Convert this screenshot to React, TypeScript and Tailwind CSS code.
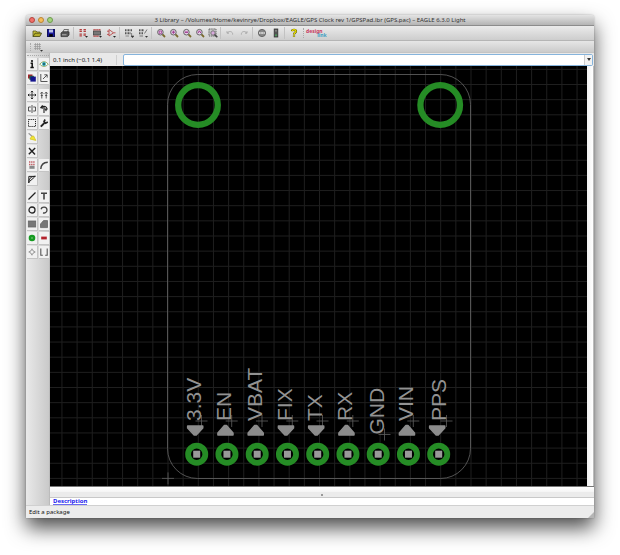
import type { ReactNode } from "react";

function Icon({ children }: { children: ReactNode }) {
  return (
    <svg viewBox="0 0 10 10" className="size-2.5 shrink-0" fill="none" stroke="#222" aria-hidden="true">
      {children}
    </svg>
  );
}

const magnifier = (mark: ReactNode) => (
  <>
    <path d="M6.2 6.2 L9 9" stroke="#7a6a2c" strokeWidth="1.8" />
    <circle cx="4.4" cy="4.2" r="2.8" fill="#e3cfe6" stroke="#666" />
    {mark}
  </>
);

const pink = "#a03a90";

const icons: Record<string, ReactNode> = {
  Open: (
    <>
      <path d="M1 8.5 V3 H4 L5 4 H8 V5" fill="#c9c23a" stroke="#555520" strokeWidth="0.8" />
      <path d="M1 8.5 L3 5.2 H9.6 L7.8 8.5 Z" fill="#b3ad2a" stroke="#444410" strokeWidth="0.8" />
    </>
  ),
  Save: (
    <>
      <rect x="1.5" y="1.5" width="7" height="7" fill="#1c1c9c" stroke="#11115c" />
      <rect x="3" y="1.5" width="4" height="3" fill="#b9bfe8" stroke="none" />
      <rect x="3.2" y="6.2" width="3.6" height="2.4" fill="#000" stroke="none" />
    </>
  ),
  Print: (
    <>
      <path d="M3 4 L4 1.5 H8.5 L7.5 4" fill="#ddd" stroke="#555" strokeWidth="0.8" />
      <path d="M1 5 L2.6 3.8 H9 V7 L7.6 8.6 H1 Z" fill="#555" stroke="#333" strokeWidth="0.8" />
      <path d="M2 6.8 H6.5" stroke="#ccc" strokeWidth="0.8" />
    </>
  ),
  Device: (
    <>
      <path d="M2.7 1 V4 M2.7 5.5 V9 M6.7 1 V4 M6.7 5.5 V8" stroke="#b34040" strokeWidth="2.4" strokeDasharray="1.2 0.5" />
      <path d="M7 8 H10 L8.5 9.7 Z" fill="#222" stroke="none" />
    </>
  ),
  Package: (
    <>
      <rect x="1.5" y="3" width="7" height="4" fill="#777" stroke="#444" strokeWidth="0.8" />
      <path d="M1.5 1.8 H8.5 M1.5 8.2 H7" stroke="#b33a3a" strokeWidth="1.4" strokeDasharray="1.2 0.7" />
      <path d="M7 8 H10 L8.5 9.7 Z" fill="#222" stroke="none" />
    </>
  ),
  Symbol: (
    <>
      <path d="M3 1.5 V8 L7.5 4.8 Z M1 3.2 H3 M1 6.4 H3 M7.5 4.8 H9.5" stroke="#b84848" strokeWidth="0.9" />
      <path d="M7 8 H10 L8.5 9.7 Z" fill="#222" stroke="none" />
    </>
  ),
  Script: (
    <>
      <path d="M1 2.2 H8.5 M1 5.2 H6.5" stroke="#555" strokeWidth="2" strokeDasharray="1 0.5" />
      <path d="M1.5 8 H5" stroke="#888" />
      <path d="M7.6 5 V8 M7 8 H10 L8.5 9.7 Z" fill="#333" stroke="#444" strokeWidth="0.6" />
    </>
  ),
  "Run ULP": (
    <>
      <path d="M1 2.2 H6 M1 5.2 H5" stroke="#555" strokeWidth="2" strokeDasharray="1 0.5" />
      <path d="M9 1.5 L6.5 5.5 M1.5 8 H5" stroke="#777" />
      <path d="M7 8 H10 L8.5 9.7 Z" fill="#333" stroke="none" />
    </>
  ),
  "Zoom to fit": magnifier(<path d="M3.2 3 H5.6 V5.4 H3.2 Z" stroke={pink} strokeWidth="0.8" />),
  "Zoom in": magnifier(<path d="M4.4 2.6 V5.8 M2.8 4.2 H6" stroke={pink} />),
  "Zoom out": magnifier(<path d="M2.8 4.2 H6" stroke={pink} strokeWidth="1.4" />),
  Redraw: magnifier(<path d="M3 5 L4.4 2.8 L5.8 5" stroke={pink} />),
  "Zoom select": (
    <>
      <rect x="1" y="1" width="7" height="7" stroke="#666" strokeDasharray="1.5 0.7" fill="#ccc" />
      <circle cx="5" cy="5" r="2.2" fill="#d8a9dc" stroke="#777" />
      <path d="M6.5 6.5 L9.3 9.3" stroke="#444" strokeWidth="1.6" />
    </>
  ),
  Undo: <path d="M2 3.2 V5.2 H4 M2.2 5 C4 2.6 8 3.2 7.6 6.6" stroke="#a6a6a6" strokeWidth="0.9" />,
  Redo: <path d="M8 3.2 V5.2 H6 M7.8 5 C6 2.6 2 3.2 2.4 6.6" stroke="#a6a6a6" strokeWidth="0.9" />,
  Stop: (
    <>
      <circle cx="5" cy="5" r="3.6" fill="#888" stroke="#666" />
      <path d="M2.2 5 H7.8" stroke="#ddd" strokeWidth="1.8" strokeDasharray="1 0.5" />
    </>
  ),
  Go: (
    <>
      <rect x="3.2" y="1" width="3.6" height="8" fill="#555" stroke="#333" strokeWidth="0.8" />
      <circle cx="5" cy="7.3" r="1.1" fill="#4c9a5c" stroke="none" />
      <circle cx="5" cy="2.8" r="1" fill="#888" stroke="none" />
    </>
  ),
  Help: (
    <>
      <path d="M3 3.2 C3.2 1.2 7 1.3 7 3.2 C7 4.6 5 4.6 5 6.4 M5 7.6 V8.8" stroke="#444400" strokeWidth="2.2" />
      <path d="M3 3.2 C3.2 1.2 7 1.3 7 3.2 C7 4.6 5 4.6 5 6.4 M5 7.6 V8.8" stroke="#f0e400" strokeWidth="1.3" />
    </>
  ),
  Info: (
    <>
      <circle cx="5" cy="2" r="1.1" fill="#111" stroke="none" />
      <path d="M3.6 4.2 H5.2 V8.5 M3.4 8.5 H6.8" stroke="#111" strokeWidth="1.5" />
    </>
  ),
  Show: (
    <>
      <path d="M0.8 5.2 C3 2 7 2 9.2 5.2 C7 8 3 8 0.8 5.2 Z" fill="#fff" stroke="#7d9a4a" strokeWidth="0.9" />
      <circle cx="5" cy="5" r="1.9" fill="#2aa7b5" stroke="none" />
      <circle cx="5" cy="5" r="0.8" fill="#123" stroke="none" />
    </>
  ),
  Display: (
    <>
      <rect x="1" y="1.5" width="4.5" height="4" fill="#a3222c" stroke="none" />
      <rect x="2.4" y="2.8" width="4.5" height="4" fill="#1d6b3c" stroke="none" />
      <rect x="3.4" y="3.6" width="5.4" height="5" fill="#15158e" stroke="none" />
    </>
  ),
  Mark: <path d="M1.8 1 V8.5 H8.5 M4 6 L8 2 M5.3 1.8 H8.2 V4.6" stroke="#444" strokeWidth="0.9" />,
  Move: (
    <path d="M5 1 V9 M1 5 H9 M3.8 2.2 L5 1 L6.2 2.2 M3.8 7.8 L5 9 L6.2 7.8 M2.2 3.8 L1 5 L2.2 6.2 M7.8 3.8 L9 5 L7.8 6.2" strokeWidth="0.9" />
  ),
  Copy: <path d="M2.8 3 V8.5 M7.2 3 V8.5 M1.4 3.6 L2.8 2 L4.2 3.6 M5.8 3.6 L7.2 2 L8.6 3.6 M1.8 5.5 H3.8 M6.2 5.5 H8.2" stroke="#444" strokeWidth="0.9" />,
  Mirror: <path d="M5 1 V9 M3.8 3 H1.5 V7 H3.8 M6.2 3 H8.5 V7 H6.2" stroke="#444" strokeWidth="0.9" />,
  Rotate: (
    <>
      <path d="M3.6 1.4 L1.8 3.6 L4 4.2 M2.4 3.2 C5 1.4 8 2.6 8 5.4 M5 2 V9" strokeWidth="1.1" />
      <path d="M5 4.6 H8.8 L7 7.4 Z" fill="#333" stroke="none" />
    </>
  ),
  Group: <rect x="1.5" y="1.5" width="7" height="7" strokeDasharray="1.2 0.9" />,
  Change: (
    <>
      <path d="M1.8 8.6 L6 4.4" strokeWidth="2" />
      <path d="M6.2 1.5 L5 3.5 L6.6 5.2 L8.8 4" strokeWidth="1.6" />
    </>
  ),
  Paste: (
    <>
      <path d="M1.6 1.2 L5.6 4.8" stroke="#999" strokeWidth="1.2" />
      <path d="M4.6 4.4 L6.6 4 L8.8 8.4 L3 7 Z" fill="#f2e534" stroke="#d2c428" strokeWidth="0.8" />
    </>
  ),
  Delete: <path d="M2 2 L8 8.4 M8.2 2 L1.8 8.2" strokeWidth="1.4" />,
  Name: (
    <>
      <path d="M2 2 H8 M2 4.4 H8" stroke="#c05c62" strokeWidth="1.5" strokeDasharray="1.4 0.7" />
      <rect x="2.4" y="5.8" width="5.2" height="3" fill="#888" stroke="none" />
    </>
  ),
  Miter: <path d="M1.8 9 C2 4.5 4 2.4 8.8 2.2" stroke="#444" strokeWidth="1.4" />,
  Split: <path d="M1.8 9 C2 5 3 2.4 8.8 2.2 M1.8 9 V2.4 H8 M2.4 7.6 L7.6 3" strokeWidth="1" />,
  Wire: <path d="M1.5 8.5 L8.5 1.5" strokeWidth="1.3" />,
  Text: <path d="M2 2.2 H8 M5 2.2 V8.6" stroke="#444" strokeWidth="1.6" />,
  Circle: <circle cx="5" cy="5" r="3" strokeWidth="1.3" />,
  Arc: <path d="M2 4.2 C2.8 1.4 7.8 1.4 8 5 C8 7.4 5.8 8.4 4 7.8" stroke="#444" strokeWidth="1.3" />,
  Rect: <rect x="1.3" y="2" width="7.4" height="6" fill="#777" stroke="#666" strokeWidth="0.8" />,
  Polygon: <path d="M1.5 8.6 V5 L4.5 1.6 H8.5 V8.6 Z" fill="#777" stroke="#666" strokeWidth="0.8" />,
  Pad: (
    <>
      <circle cx="5" cy="5" r="3.3" fill="#159a20" stroke="none" />
      <circle cx="5" cy="5" r="0.8" fill="#8fcf8f" stroke="none" />
    </>
  ),
  Smd: <rect x="2.2" y="3.6" width="5.6" height="2.8" fill="#b3222c" stroke="none" />,
  Hole: <path d="M5 2.4 L7.6 5 L5 7.6 L2.4 5 Z M5 1.6 V3.4 M5 6.6 V8.4 M1.6 5 H3.4 M6.6 5 H8.4" stroke="#888" strokeWidth="0.9" />,
  Dimension: <path d="M1.8 1.5 V8.2 H3.8 M8.2 1.5 V8.2 H6.2" stroke="#555" strokeWidth="1.1" />,
};

const toolbarGroups: { wide: boolean; items: string[] }[] = [
  { wide: true, items: ["Open", "Save", "Print"] },
  { wide: true, items: ["Device", "Package", "Symbol"] },
  { wide: true, items: ["Script", "Run ULP"] },
  { wide: false, items: ["Zoom to fit", "Zoom in", "Zoom out", "Redraw", "Zoom select"] },
  { wide: true, items: ["Undo", "Redo"] },
  { wide: true, items: ["Stop", "Go"] },
  { wide: true, items: ["Help"] },
];

const paletteGroups: string[][][] = [
  [["Info", "Show"], ["Display", "Mark"]],
  [["Move", "Copy"], ["Mirror", "Rotate"], ["Group", "Change"], ["Paste"], ["Delete"], ["Name", "Miter"], ["Split"]],
  [["Wire", "Text"], ["Circle", "Arc"], ["Rect", "Polygon"], ["Pad", "Smd"], ["Hole", "Dimension"]],
];

function TitleBar() {
  return (
    <header className="relative flex h-[11px] items-center justify-center rounded-t-[3px] border-b border-[#8c8c8c] bg-linear-to-b from-[#e4e4e4] to-[#b4b4b4] px-8">
      <div className="absolute left-[3px] flex gap-[3px]">
        <button aria-label="Close" className="size-1.5 rounded-full border border-[#b4453f] bg-[#f0706a]" />
        <button aria-label="Minimize" className="size-1.5 rounded-full border border-[#b98535] bg-[#f6bd58]" />
        <button aria-label="Zoom" className="size-1.5 rounded-full border border-[#6c9a4c] bg-[#a3d47d]" />
      </div>
      <h1 className="truncate text-[#333]">
        3 Library – /Volumes/Home/kevinrye/Dropbox/EAGLE/GPS Clock rev 1/GPSPad.lbr (GPS.pac) – EAGLE 6.3.0 Light
      </h1>
    </header>
  );
}

function Toolbar() {
  return (
    <div className="flex h-[15px] items-center border-b border-[#b5b5b5] bg-linear-to-b from-[#ebebeb] to-[#cdcdcd] pl-1">
      {toolbarGroups.map((group, i) => (
        <div key={group.items[0]} className="flex items-center">
          {i > 0 && <span className="mr-0.5 ml-px h-3 w-px bg-[#c2c2c2]" />}
          {group.items.map((name) => (
            <button
              key={name}
              aria-label={name}
              className={`flex h-3.5 items-center justify-center ${group.wide ? "w-3.5" : "w-[13px]"}`}
            >
              <Icon>{icons[name]}</Icon>
            </button>
          ))}
        </div>
      ))}
      <span className="mx-0.5 h-2.5 border-l border-dotted border-[#aaa]" />
      <a href="#design-link" className="flex flex-col text-[5px] leading-[4px] font-bold">
        <span className="pr-1 text-[#c8385c]">design</span>
        <span className="self-end text-[#3f9fc4]">link</span>
      </a>
    </div>
  );
}

function Palette() {
  return (
    <nav aria-label="Tools" className="flex w-6 shrink-0 flex-col gap-1 border-r border-[#bbb] bg-linear-to-r from-[#e9e9e9] to-[#c9c9c9] pt-0.5 pl-px">
      <span className="-mb-1 h-[3px] border-t border-dotted border-[#aaa]" />
      {paletteGroups.map((rows) => (
        <div key={rows[0][0]} className="flex flex-col gap-px">
          {rows.map((row) => (
            <div key={row[0]} className="flex gap-px">
              {row.map((name) => (
                <button
                  key={name}
                  aria-label={name}
                  className="flex h-[13px] w-[11px] items-center justify-center border-r border-b border-[#c4c4c4] bg-[#f1f1f1]"
                >
                  <Icon>{icons[name]}</Icon>
                </button>
              ))}
            </div>
          ))}
        </div>
      ))}
    </nav>
  );
}

const PITCH = 15.15;

const pins = [
  { name: "3.3V", x: 201.5, y: 421, arrow: "down" },
  { name: "EN", x: 231.7, y: 421, arrow: "up" },
  { name: "VBAT", x: 262, y: 421, arrow: "up" },
  { name: "FIX", x: 292.3, y: 421, arrow: "down" },
  { name: "TX", x: 322.5, y: 421, arrow: "down" },
  { name: "RX", x: 352.8, y: 421, arrow: "up" },
  { name: "GND", x: 384.5, y: 434.5, arrow: "none" },
  { name: "VIN", x: 413.3, y: 421, arrow: "up" },
  { name: "PPS", x: 446.5, y: 421, arrow: "down" },
];

function Cross({ x, y }: { x: number; y: number }) {
  return <path d={`M${x - 6} ${y} H${x + 6} M${x} ${y - 6} V${y + 6}`} stroke="#606060" strokeWidth="0.8" />;
}

function PackageDrawing() {
  const columns = Array.from({ length: 36 }, (_, i) => 168 + (i - 7) * PITCH);
  const rows = Array.from({ length: 28 }, (_, i) => 478.4 - i * PITCH);
  return (
    <svg viewBox="50 66 537 420" className="block h-auto w-full bg-black" fill="none" role="img" aria-label="Package layout">
      <g stroke="#1f1f1f" strokeWidth="1">
        {columns.map((x) => (
          <path key={x} d={`M${x} 66 V486`} />
        ))}
        {rows.map((y) => (
          <path key={y} d={`M50 ${y} H587`} />
        ))}
      </g>
      <rect x="167.5" y="74.5" width="303" height="404" rx="30" stroke="#666" strokeWidth="0.8" />
      <Cross x={168} y={478.4} />
      <circle cx="198" cy="105" r="19.8" stroke="#258c25" strokeWidth="6.3" />
      <circle cx="440.2" cy="105" r="19.8" stroke="#258c25" strokeWidth="6.3" />
      {pins.map((pin, i) => {
        const cx = 196.7 + i * 30.25;
        const ax = cx - 1.5;
        return (
          <g key={pin.name}>
            <Cross x={pin.x} y={pin.y} />
            <text
              transform={`translate(${pin.x - 0.5} ${pin.y}) rotate(-90)`}
              fontSize="21"
              fill="#929292"
              className="font-['Liberation_Sans',Arial,sans-serif]"
            >
              {pin.name}
            </text>
            {pin.arrow === "down" && (
              <path d={`M${ax - 7.5} 426 H${ax + 7.5} V428 L${ax + 1} 435 H${ax - 1} L${ax - 7.5} 428 Z`} fill="#8c8c8c" stroke="#8c8c8c" strokeWidth="1.6" strokeLinejoin="round" />
            )}
            {pin.arrow === "up" && (
              <path d={`M${ax - 7.5} 435 H${ax + 7.5} V433 L${ax + 1} 425.5 H${ax - 1} L${ax - 7.5} 433 Z`} fill="#8c8c8c" stroke="#8c8c8c" strokeWidth="1.6" strokeLinejoin="round" />
            )}
            <circle cx={cx} cy="454.2" r="8.6" fill="#000" stroke="#258c25" strokeWidth="5.8" />
            <rect x={cx - 3.5} y="450.7" width="7" height="7" fill="#999" />
          </g>
        );
      })}
    </svg>
  );
}

export default function App() {
  return (
    <div className="bg-white px-[26px] pt-[15px] pb-9 font-['Noto_Sans','Open_Sans',sans-serif] text-[6px] leading-[8px] text-[#111]">
      <main className="flex flex-col rounded-t-[3px] bg-[#ececec] shadow-[0_10px_20px_rgba(0,0,0,0.7),0_0_2px_rgba(0,0,0,0.3)]">
        <TitleBar />
        <Toolbar />
        <div className="flex h-3 items-center border-b border-[#c4c4c4] bg-linear-to-b from-[#e6e6e6] to-[#cbcbcb] pl-1">
          <span className="h-2 border-l border-dotted border-[#aaa]" />
          <button aria-label="Grid" className="ml-0.5 flex size-2.5">
            <Icon>
              <path d="M1 2.5 H8 M1 4.5 H8 M1 6.5 H8 M2.5 1 V8 M4.5 1 V8 M6.5 1 V8" stroke="#999" strokeWidth="0.7" />
              <path d="M7 8 H10 L8.5 9.7 Z" fill="#333" stroke="none" />
            </Icon>
          </button>
        </div>
        <div className="flex">
          <Palette />
          <section className="flex min-w-0 flex-1 flex-col">
            <div className="flex h-[13px] items-center bg-[#e9e9e9]">
              <label htmlFor="command" className="w-[66px] shrink-0 pl-[3px] whitespace-nowrap">
                0.1 inch (−0.1 1.4)
              </label>
              <span className="mr-1.5 h-2.5 w-px bg-[#cfcfcf]" />
              <div className="mr-px flex h-3 min-w-0 flex-1 items-stretch rounded-[2px] border border-[#86b4dc] bg-white">
                <input id="command" type="text" className="min-w-0 flex-1 px-1 outline-none" />
                <button aria-label="Command history" className="flex w-2 items-center justify-center border-l border-[#ccc] bg-[#f2f2f2]">
                  <svg viewBox="0 0 4 3" className="h-[3px] w-1" aria-hidden="true">
                    <path d="M0 0 H4 L2 3 Z" fill="#333" />
                  </svg>
                </button>
              </div>
            </div>
            <div className="flex">
              <div className="min-w-0 flex-1">
                <PackageDrawing />
              </div>
              <div className="w-[7px] border-r border-[#bbb] bg-linear-to-r from-[#f0f0f0] to-white" />
            </div>
            <div className="h-1.5 border-t border-[#777] bg-linear-to-b from-white to-[#f4f4f4]" />
            <div className="flex h-1.5 items-center justify-center border-b border-[#c8c8c8] bg-[#ebebeb]">
              <span className="size-0.5 bg-[#999]" />
            </div>
            <div className="flex h-[7px] items-center bg-white pl-[3px]">
              <a href="#description" className="border-b border-[#6a6af2] leading-[6px] font-bold text-[#1a1aee]">
                Description
              </a>
            </div>
          </section>
        </div>
        <footer className="flex h-[13px] items-center justify-between border-t border-[#d0d0d0] pl-[3px]">
          <span>Edit a package</span>
          <svg viewBox="0 0 6 6" className="size-1.5 self-end" aria-hidden="true">
            <path d="M6 0 V6 H0 Z" fill="#b5b5b5" />
          </svg>
        </footer>
      </main>
    </div>
  );
}
